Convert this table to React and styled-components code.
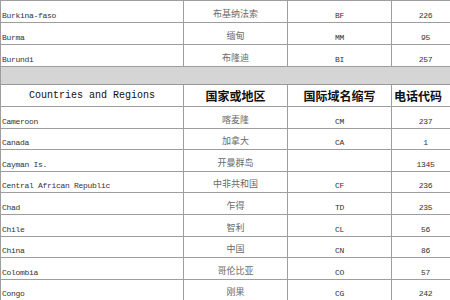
import styled, { createGlobalStyle } from 'styled-components';

const GlobalStyle = createGlobalStyle`
  html, body {
    margin: 0;
    padding: 0;
    background: #fff;
    overflow: hidden;
  }
`;

const Sheet = styled.div`
  width: 460px;
  border-top: 1px solid #9e9e9e;
  border-left: 1px solid #9e9e9e;
  font-family: "Liberation Mono", "Noto Sans CJK SC", monospace;
`;

const Row = styled.div`
  display: grid;
  grid-template-columns: 183px 104px 104px 68px;
  height: ${(p) => p.$h}px;
  box-sizing: border-box;
  border-bottom: 1px solid #9e9e9e;
`;

const Band = styled.div`
  height: 18px;
  box-sizing: border-box;
  background: #d5d5d5;
  border-bottom: 1px solid #999;
`;

const Cell = styled.div`
  display: flex;
  align-items: flex-end;
  justify-content: ${(p) => (p.$left ? 'flex-start' : 'center')};
  padding: 0 0 2px ${(p) => (p.$left ? '1px' : '0')};
  box-sizing: border-box;
  border-right: 1px solid #9e9e9e;
  overflow: hidden;
  white-space: nowrap;
  font-size: 8px;
  letter-spacing: -0.3px;
  color: #333;
`;

const CnCell = styled(Cell)`
  font-family: "Noto Sans CJK SC", sans-serif;
  font-size: 9px;
  letter-spacing: 0;
  color: #6a6a6a;
`;

const HeadCell = styled.div`
  display: flex;
  align-items: center;
  justify-content: ${(p) => (p.$left ? 'flex-start' : 'center')};
  padding-left: ${(p) => (p.$left ? '2px' : '0')};
  box-sizing: border-box;
  border-right: 1px solid #9e9e9e;
  white-space: nowrap;
  overflow: hidden;
  color: #111;
  font-size: ${(p) => (p.$cn ? '12px' : '10px')};
  font-weight: ${(p) => (p.$cn ? 700 : 400)};
  font-family: ${(p) =>
    p.$cn ? '"Noto Sans CJK SC", sans-serif' : '"Liberation Mono", monospace'};
`;

const before = [
  ['Burkina-faso', '布基纳法索', 'BF', '226'],
  ['Burma', '缅甸', 'MM', '95'],
  ['Burundi', '布隆迪', 'BI', '257'],
];

const after = [
  ['Cameroon', '喀麦隆', 'CM', '237'],
  ['Canada', '加拿大', 'CA', '1'],
  ['Cayman Is.', '开曼群岛', '', '1345'],
  ['Central African Republic', '中非共和国', 'CF', '236'],
  ['Chad', '乍得', 'TD', '235'],
  ['Chile', '智利', 'CL', '56'],
  ['China', '中国', 'CN', '86'],
  ['Colombia', '哥伦比亚', 'CO', '57'],
  ['Congo', '刚果', 'CG', '242'],
];

const CountryRow = ({ item, h }) => (
  <Row $h={h}>
    <Cell $left>{item[0]}</Cell>
    <CnCell>{item[1]}</CnCell>
    <Cell>{item[2]}</Cell>
    <Cell>{item[3]}</Cell>
  </Row>
);

export default function App() {
  return (
    <>
      <GlobalStyle />
      <Sheet>
        {before.map((c) => (
          <CountryRow key={c[0]} item={c} h={22} />
        ))}
        <Band />
        <Row $h={22}>
          <HeadCell>Countries and Regions</HeadCell>
          <HeadCell $cn>国家或地区</HeadCell>
          <HeadCell $cn>国际域名缩写</HeadCell>
          <HeadCell $cn $left>电话代码</HeadCell>
        </Row>
        {after.map((c) => (
          <CountryRow key={c[0]} item={c} h={21.6} />
        ))}
      </Sheet>
    </>
  );
}
